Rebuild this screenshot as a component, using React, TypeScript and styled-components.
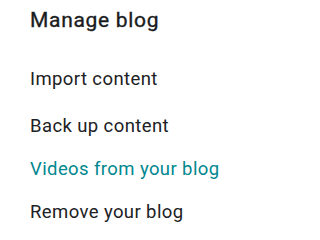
import React from 'react';
import styled, { createGlobalStyle } from 'styled-components';

const GlobalStyle = createGlobalStyle`
	html, body {
		margin: 0;
		padding: 0;
		background: #ffffff;
	}
	body {
		font-family: Roboto, "Noto Sans", "Liberation Sans", sans-serif;
		-webkit-font-smoothing: antialiased;
	}
`;

const Panel = styled.section`
	display: flex;
	flex-direction: column;
	width: 320px;
	height: 236px;
	padding: 8px 0 0 30px;
	box-sizing: border-box;
	background: #ffffff;
	overflow: hidden;
`;

const Title = styled.h2`
	margin: 0 0 26px;
	font-size: 21px;
	line-height: 24px;
	font-weight: 400;
	letter-spacing: 0.7px;
	color: #1a1c1e;
	-webkit-text-stroke: 0.35px #1a1c1e;
`;

const Menu = styled.ul`
	display: flex;
	flex-direction: column;
	margin: 0;
	padding: 0;
	list-style: none;
`;

const Item = styled.li<{ $accent?: boolean; $spaced?: boolean }>`
	height: ${(p) => (p.$spaced ? '47px' : '43px')};
	font-size: 18.5px;
	line-height: 43px;
	font-weight: 400;
	letter-spacing: 0.4px;
	color: ${(p) => (p.$accent ? '#00878f' : '#202124')};
	cursor: pointer;
`;

const items = [
	{ label: 'Import content', spaced: true },
	{ label: 'Back up content' },
	{ label: 'Videos from your blog', accent: true },
	{ label: 'Remove your blog' },
];

export default function App() {
	return (
		<>
			<GlobalStyle />
			<Panel>
				<Title>Manage blog</Title>
				<Menu>
					{items.map((it) => (
						<Item key={it.label} $accent={it.accent} $spaced={it.spaced}>
							{it.label}
						</Item>
					))}
				</Menu>
			</Panel>
		</>
	);
}
